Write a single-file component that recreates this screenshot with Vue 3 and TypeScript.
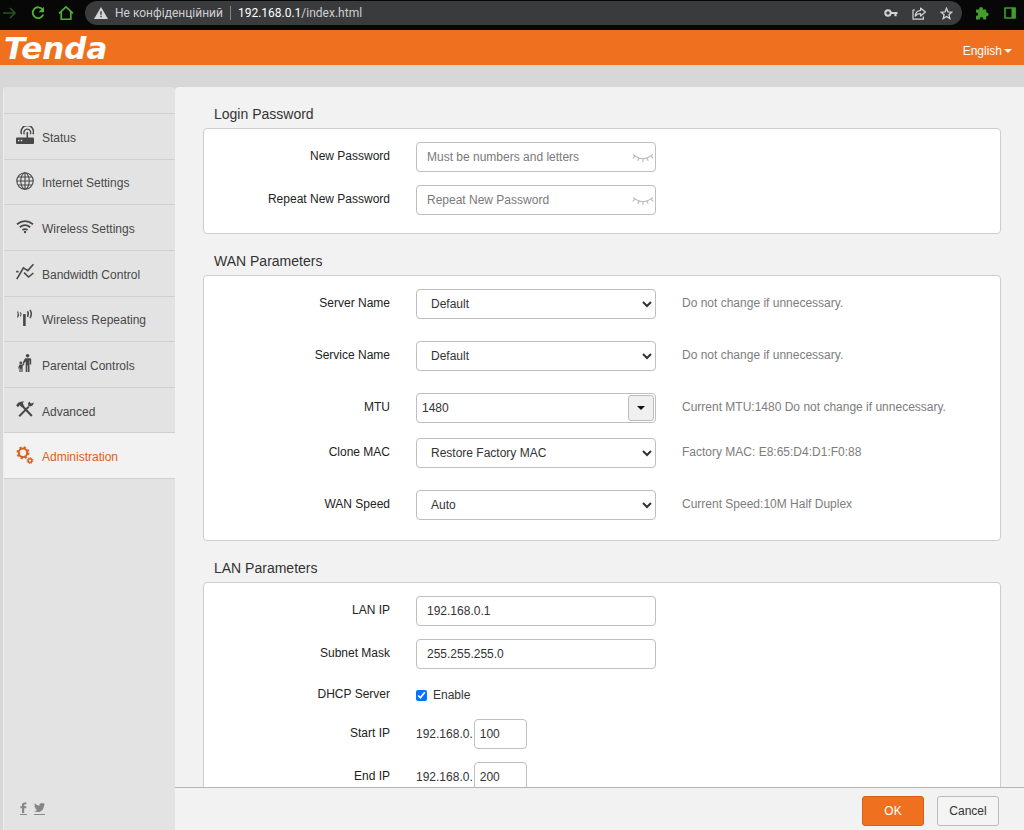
<script setup lang="ts">
import { ref } from 'vue'

interface NavItem {
  id: string
  label: string
}

const navItems: NavItem[] = [
  { id: 'status', label: 'Status' },
  { id: 'internet', label: 'Internet Settings' },
  { id: 'wireless', label: 'Wireless Settings' },
  { id: 'bandwidth', label: 'Bandwidth Control' },
  { id: 'repeating', label: 'Wireless Repeating' },
  { id: 'parental', label: 'Parental Controls' },
  { id: 'advanced', label: 'Advanced' },
  { id: 'admin', label: 'Administration' },
]

const active = ref('admin')
const newPassword = ref('')
const repeatPassword = ref('')
const serverName = ref('Default')
const serviceName = ref('Default')
const mtu = ref('1480')
const cloneMac = ref('Restore Factory MAC')
const wanSpeed = ref('Auto')
const lanIp = ref('192.168.0.1')
const subnet = ref('255.255.255.0')
const dhcp = ref(true)
const startIp = ref('100')
const endIp = ref('200')
</script>

<template>
  <div class="window">
    <div class="browser-bar">
      <button class="tool" type="button" aria-label="Forward">
        <svg width="14" height="14" viewBox="0 0 14 14" fill="none" stroke="#23591a" stroke-width="1.5"><path d="M0 7h12M7 2l5 5-5 5" /></svg>
      </button>
      <button class="tool reload" type="button" aria-label="Reload">
        <svg width="14" height="14" viewBox="0 0 14 14" fill="none" stroke="#4fb32f" stroke-width="1.8"><path d="M11.6 3.6A5.4 5.4 0 1 0 12.2 8.6" /><path d="M13 .8v5.4H7.6z" fill="#4fb32f" stroke="none" /></svg>
      </button>
      <button class="tool home" type="button" aria-label="Home">
        <svg width="16" height="16" viewBox="0 0 16 16" fill="none" stroke="#4fb32f" stroke-width="1.6"><path d="M1 8.4L8 1.8l7 6.6M3.2 6.6v7.6h9.600V6.6" /></svg>
      </button>
      <div class="address">
        <svg class="warn" width="14" height="12" viewBox="0 0 14 12"><path d="M7 0l7 12H0z" fill="#d3d4d6" /><path d="M6.3 4.2h1.4v3.6H6.3zM6.3 8.8h1.4v1.4H6.3z" fill="#3a3b3e" /></svg>
        <span class="insecure">Не конфіденційний</span>
        <span class="divider"></span>
        <span class="url"><b>192.168.0.1</b>/index.html</span>
        <span class="address-tools">
          <button class="tool" type="button" aria-label="Passwords">
            <svg width="14" height="10" viewBox="0 0 14 10"><circle cx="4" cy="5" r="2.7" fill="none" stroke="#d3d4d6" stroke-width="2" /><path d="M7 4h6.5v2H12.6v2.2h-2.2V6H7z" fill="#d3d4d6" /></svg>
          </button>
          <button class="tool" type="button" aria-label="Share">
            <svg width="14" height="13" viewBox="0 0 14 13" fill="none" stroke="#d3d4d6" stroke-width="1.2" stroke-linejoin="round"><path d="M3 3H1v9.2h10.4V9.4" /><path d="M8.6 1l4.8 4-4.8 4V6.6C6 6.6 4.4 7.4 3.2 9.2 3.4 5.8 5.2 3.8 8.6 3.4z" /></svg>
          </button>
          <button class="tool" type="button" aria-label="Bookmark">
            <svg width="13" height="13" viewBox="0 0 14 14" fill="none" stroke="#d3d4d6" stroke-width="1.4"><path d="M7 1.4l1.6 3.9 4.2.3-3.2 2.7 1 4.1L7 10.2l-3.6 2.2 1-4.1L1.2 5.6l4.2-.3z" /></svg>
          </button>
        </span>
      </div>
      <button class="tool puzzle" type="button" aria-label="Extensions">
        <svg width="14" height="14" viewBox="0 0 14 14" fill="#3fa02b"><path d="M1 3.4h3.2v-.6a1.9 1.9 0 0 1 3.8 0v.6h3.2v3.2h.6a1.8 1.8 0 0 1 0 3.6h-.6v3.2H8.2v-.7a1.7 1.7 0 0 0-3.4 0v.7H1v-3.6h.6a1.6 1.6 0 0 0 0-3.2H1z" /></svg>
      </button>
      <button class="tool panel-toggle" type="button" aria-label="Side panel">
        <svg width="12" height="12" viewBox="0 0 12 12"><path d="M1 1h10v10H1z" fill="none" stroke="#3fa02b" stroke-width="1.6" /><path d="M7.5 1h4v10h-4z" fill="#3fa02b" /></svg>
      </button>
    </div>

    <header class="brand">
      <span class="logo">Tenda</span>
      <button class="language" type="button">English<span class="caret"></span></button>
    </header>

    <div class="body">
      <aside class="sidebar">
        <nav class="nav">
          <a v-for="item in navItems" :key="item.id" href="#" class="nav-item" :class="{ active: item.id === active }" @click.prevent="active = item.id">
            <svg class="icon" width="18" height="18" viewBox="0 0 18 18" fill="none" stroke="currentColor">
              <g v-if="item.id === 'status'">
                <path d="M1 11.500h16q1 0 1 1V17q0 1-1 1H1q-1 0-1-1v-4.500q0-1 1-1z" fill="currentColor" stroke="none" />
                <path d="M2 14.500h1.400M4.800 14.500h1.400" stroke="#e4e4e4" stroke-width="1.4" />
                <path d="M11.300 12V6" stroke-width="1.6" />
                <path d="M8.400 8.400a3.400 3.400 0 1 1 5.800 0" stroke-width="1.200" />
                <path d="M5.600 8.200a6.200 6.200 0 1 1 11.400 0" stroke-width="1.500" />
              </g>
              <g v-else-if="item.id === 'internet'" stroke-width="1.1">
                <circle cx="9" cy="9" r="8.2" />
                <ellipse cx="9" cy="9" rx="4.2" ry="8.2" />
                <path d="M9 .8v16.4M.8 9h16.4M2 5h14M2 13h14" />
              </g>
              <g v-else-if="item.id === 'wireless'" stroke-width="1.8">
                <path d="M1 6.200q8-6 16 0M3.800 9.200q5.200-4 10.400 0M6.400 12q2.600-1.800 5.200 0" />
                <circle cx="9" cy="14" r="1.2" fill="currentColor" stroke="none" />
              </g>
              <g v-else-if="item.id === 'bandwidth'" stroke-width="1.6">
                <path d="M.8 16.200L7.400 4.800l4.400 2.800 5.600-6.400" />
                <path d="M.2 8.600h2.400M8 9.600l4.600 4.400 4.800-4" />
              </g>
              <g v-else-if="item.id === 'repeating'">
                <path d="M8.400 5V17" stroke-width="2.600" />
                <path d="M4.400 3.400q1.400 2 0 4M1.600 2.400q1.600 3 0 6" stroke-width="1.1" />
                <path d="M11.400 2.200q1.800 2.600 0 5.600M14 .8q2.600 4 0 8.400" stroke-width="1.500" />
              </g>
              <g v-else-if="item.id === 'parental'" fill="currentColor" stroke="none">
                <circle cx="11.6" cy="1.8" r="1.8" />
                <path d="M9 4.2h5.2q1 0 1 1v5.3h-1.3V6.6h-.4V18h-1.6v-6.600h-.6V18H9.700V7.400L7.400 10 6.600 9z" />
                <circle cx="4.800" cy="8.800" r="1.400" />
                <path d="M3.400 10.600h2.800l1.600-1.400.7.8-1.900 2.200V18H5.400v-3.200h-.8V18H3.400v-5l-.6 1.400H2z" />
              </g>
              <g v-else-if="item.id === 'advanced'">
                <path d="M6 5.600L15.800 16" stroke-width="2.200" />
                <path d="M3.200 16.200L12.800 6.600" stroke-width="2" />
                <path d="M.2 5.600Q2 1 8.200 1.600L6.800 3l1 2.400-2 1.800-2.200-2-1.600 2z" fill="currentColor" stroke="none" />
                <path d="M13.400 1.600q-2.200 1.600-1.200 4.200 2.400 1.600 4.800-.8l.8-2.600-2.600 1.200-1-.8z" fill="currentColor" stroke="none" />
              </g>
              <g v-else>
                <circle cx="7" cy="6.800" r="4.200" stroke-width="2" />
                <circle cx="7" cy="6.800" r="5.600" stroke-width="1.800" stroke-dasharray="2.200 2.198" />
                <circle cx="14" cy="14.600" r="1.900" stroke-width="1.500" />
                <circle cx="14" cy="14.600" r="2.900" stroke-width="1" stroke-dasharray="1.200 1.077" />
              </g>
            </svg>
            {{ item.label }}
          </a>
        </nav>
        <div class="social">
          <a href="#" aria-label="Facebook">
            <svg width="7" height="11" viewBox="0 0 7 11" fill="#858585"><path d="M2 11V6.200H.4V4.200H2V3Q2 .4 4.600.4h1.800v1.900H5.200q-1 0-1 1v.9h2.200L6.100 6.200H4.200V11z" /></svg>
          </a>
          <a href="#" aria-label="Twitter">
            <svg width="11" height="11" viewBox="0 0 12 11" fill="#858585"><path d="M12 2.200l-1.200 1.300C10.800 7.400 8 10.400 4.200 10.400 2.600 10.400 1.200 10 0 9.200q2 .1 3.500-1.100Q1.800 7.900 1.300 6.400h1Q.5 5.800.4 3.900l1 .3Q0 2.900.8.900q2.100 2.500 5 2.600Q5.500 1 8 .5q1.200-.1 2 .7l1.500-.6-.9 1.400z" /></svg>
          </a>
        </div>
      </aside>

      <form class="main" @submit.prevent>
        <div class="scroll">
          <section>
            <h2>Login Password</h2>
            <div class="panel">
              <div class="row">
                <label class="name" for="new-pw">New Password</label>
                <div class="control field">
                  <input id="new-pw" v-model="newPassword" type="password" placeholder="Must be numbers and letters">
                  <svg class="eye" width="22" height="10" viewBox="0 0 22 10" fill="none" stroke="#bdbdbd" stroke-width="1.200"><path d="M1 1.400q10 8.600 20 0M3 3L.8 5.400M7 5L5.800 7.800M11 5.800V9M15 5l1.200 2.800M19 3l2.200 2.400" /></svg>
                </div>
              </div>
              <div class="row">
                <label class="name" for="repeat-pw">Repeat New Password</label>
                <div class="control field">
                  <input id="repeat-pw" v-model="repeatPassword" type="password" placeholder="Repeat New Password">
                  <svg class="eye" width="22" height="10" viewBox="0 0 22 10" fill="none" stroke="#bdbdbd" stroke-width="1.200"><path d="M1 1.400q10 8.600 20 0M3 3L.8 5.400M7 5L5.800 7.800M11 5.800V9M15 5l1.200 2.800M19 3l2.200 2.400" /></svg>
                </div>
              </div>
            </div>
          </section>

          <section>
            <h2>WAN Parameters</h2>
            <div class="panel wan">
              <div class="row">
                <label class="name" for="server">Server Name</label>
                <select id="server" v-model="serverName" class="control"><option>Default</option></select>
                <span class="note">Do not change if unnecessary.</span>
              </div>
              <div class="row">
                <label class="name" for="service">Service Name</label>
                <select id="service" v-model="serviceName" class="control"><option>Default</option></select>
                <span class="note">Do not change if unnecessary.</span>
              </div>
              <div class="row">
                <label class="name" for="mtu">MTU</label>
                <div class="control combo">
                  <input id="mtu" v-model="mtu" type="text">
                  <button type="button" aria-label="MTU values"><span class="caret"></span></button>
                </div>
                <span class="note">Current MTU:1480 Do not change if unnecessary.</span>
              </div>
              <div class="row close">
                <label class="name" for="mac">Clone MAC</label>
                <select id="mac" v-model="cloneMac" class="control"><option>Restore Factory MAC</option></select>
                <span class="note">Factory MAC: E8:65:D4:D1:F0:88</span>
              </div>
              <div class="row">
                <label class="name" for="speed">WAN Speed</label>
                <select id="speed" v-model="wanSpeed" class="control"><option>Auto</option></select>
                <span class="note">Current Speed:10M Half Duplex</span>
              </div>
            </div>
          </section>

          <section>
            <h2>LAN Parameters</h2>
            <div class="panel">
              <div class="row">
                <label class="name" for="lan-ip">LAN IP</label>
                <div class="control field"><input id="lan-ip" v-model="lanIp" type="text"></div>
              </div>
              <div class="row">
                <label class="name" for="mask">Subnet Mask</label>
                <div class="control field"><input id="mask" v-model="subnet" type="text"></div>
              </div>
              <div class="row check-row">
                <span class="name">DHCP Server</span>
                <label class="check"><input v-model="dhcp" type="checkbox">Enable</label>
              </div>
              <div class="row after-check">
                <label class="name" for="start-ip">Start IP</label>
                <div class="control ip">192.168.0.<input id="start-ip" v-model="startIp" type="text"></div>
              </div>
              <div class="row">
                <label class="name" for="end-ip">End IP</label>
                <div class="control ip">192.168.0.<input id="end-ip" v-model="endIp" type="text"></div>
              </div>
            </div>
          </section>
        </div>
        <footer class="actions">
          <button class="ok" type="submit">OK</button>
          <button class="cancel" type="button">Cancel</button>
        </footer>
      </form>
    </div>
  </div>
</template>

<style>
body {
  margin: 0;
  background: #d7d7d7;
}
</style>

<style scoped>
* {
  box-sizing: border-box;
}
.window {
  display: flex;
  flex-direction: column;
  height: 100vh;
  font: 12px/20px "Liberation Sans", Arial, sans-serif;
  color: #333;
  overflow: hidden;
}
button,
input,
select {
  font: inherit;
  color: inherit;
}
svg {
  display: block;
}
.browser-bar {
  flex: none;
  display: flex;
  align-items: center;
  height: 30px;
  padding: 0 8px 4px 3px;
  background: #070707;
  font: 12px/24px Roboto, "Noto Sans", sans-serif;
}
.tool {
  display: block;
  padding: 0;
  border: 0;
  background: none;
}
.reload {
  margin-left: 14px;
}
.home {
  margin-left: 13px;
}
.address {
  flex: 1;
  display: flex;
  align-items: center;
  height: 24px;
  margin-left: 11px;
  padding: 0 9px;
  border-radius: 12px;
  background: #3a3b3d;
  color: #cfd0d2;
}
.insecure {
  margin-left: 7px;
}
.divider {
  width: 1px;
  height: 14px;
  margin: 0 7px;
  background: #85868a;
}
.url b {
  font-weight: 400;
  color: #fff;
}
.address-tools {
  display: flex;
  align-items: center;
  gap: 14px;
  margin-left: auto;
}
.puzzle {
  margin-left: 13px;
}
.panel-toggle {
  margin-left: 15px;
}
.brand {
  flex: none;
  display: flex;
  align-items: center;
  justify-content: space-between;
  height: 36px;
  padding: 0 12px 0 4px;
  background: #ef711f;
  border-bottom: 1px solid #f9cfa6;
  color: #fff;
}
.logo {
  font: italic 700 31px/34px "DejaVu Sans", sans-serif;
}
.language {
  display: flex;
  align-items: center;
  gap: 2px;
  padding: 6px 0 0;
  border: 0;
  background: none;
}
.caret {
  border: solid transparent;
  border-width: 4px 4px 0;
  border-top-color: currentColor;
}
.body {
  flex: 1;
  min-height: 0;
  display: flex;
  padding: 21px 0 0 3px;
  background: #d7d7d7;
}
.sidebar {
  flex: 0 0 172px;
  display: flex;
  flex-direction: column;
  padding-top: 26px;
  border-left: 1px solid #ececec;
  border-radius: 4px 4px 0 0;
  background: #e3e3e3;
}
.nav {
  display: grid;
  grid-auto-rows: 1fr;
  min-height: 366px;
  border-bottom: 1px solid #d0d0d0;
}
.nav-item {
  display: flex;
  align-items: center;
  gap: 8px;
  padding: 3px 0 0 12px;
  border-top: 1px solid #d0d0d0;
  color: #484848;
  text-decoration: none;
}
.icon {
  margin-bottom: 5px;
}
.nav-item.active {
  background: #f2f2f2;
  color: #dc5f1e;
}
.social {
  display: flex;
  gap: 7px;
  margin-top: auto;
  padding: 0 0 15px 16px;
}
.social a {
  padding-bottom: 1px;
  border-bottom: 1px solid #8a8a8a;
}
.main {
  flex: 1;
  min-width: 0;
  display: flex;
  flex-direction: column;
  border-radius: 4px 0 0 0;
  background: #f2f2f2;
}
.scroll {
  flex: 1;
  min-height: 0;
  overflow-y: auto;
  scrollbar-width: none;
  padding: 0 23px 20px 28px;
}
h2 {
  margin: 0;
  padding: 17px 0 4px 11px;
  font-size: 14px;
  font-weight: 400;
  line-height: 20px;
}
.panel {
  padding: 0 0 18px;
  border: 1px solid #cdcdcd;
  border-radius: 4px;
  background: #fff;
}
.row {
  display: flex;
  align-items: center;
  gap: 26px;
  min-height: 30px;
  margin-top: 13px;
}
.wan .row + .row {
  margin-top: 22px;
}
.wan .row + .close {
  margin-top: 15px;
}
.wan {
  padding-bottom: 20px;
}
.name {
  flex: 0 0 186px;
  text-align: right;
  padding-bottom: 2px;
  color: #222;
}
.note {
  color: #7d7d7d;
  padding-bottom: 2px;
}
.control {
  flex: 0 0 240px;
  height: 30px;
}
.field {
  position: relative;
}
.field input,
select,
.combo,
.ip input {
  width: 100%;
  height: 30px;
  border: 1px solid #bfbfbf;
  border-radius: 4px;
  background: #fff;
}
select.control,
.combo {
  width: 240px;
}
.field input {
  padding: 0 26px 0 10px;
}
.field input::placeholder {
  color: #7a7a7a;
}
.eye {
  position: absolute;
  top: 11px;
  right: 2px;
}
select {
  padding: 0 1px 0 10px;
}
.combo {
  display: flex;
  padding: 1px;
}
.combo input {
  flex: 1;
  min-width: 0;
  padding: 0 4px;
  border: 0;
  background: none;
}
.combo button {
  display: flex;
  align-items: center;
  justify-content: center;
  flex: 0 0 26px;
  padding: 0;
  border: 1px solid #bcbcbc;
  border-radius: 3px;
  background: #f0f0f0;
  color: #111;
}
.check-row {
  min-height: 26px;
}
.row.after-check {
  margin-top: 11px;
}
.check {
  display: flex;
  align-items: center;
  gap: 6px;
}
.check input {
  width: 11px;
  height: 11px;
  margin: 0;
}
.ip {
  display: flex;
  align-items: center;
  gap: 1px;
}
.ip input {
  width: 53px;
  padding: 0 5px;
}
.actions {
  flex: none;
  display: flex;
  justify-content: flex-end;
  gap: 13px;
  padding: 8px 25px 4px;
  border-top: 1px solid #b5b5b5;
}
.actions button {
  width: 62px;
  height: 30px;
  padding: 0;
  border-radius: 3px;
}
.ok {
  border: 1px solid #d75f17;
  background: #ef711f;
  color: #fff;
}
.cancel {
  border: 1px solid #bcbcbc;
  background: #f4f4f4;
}
</style>
